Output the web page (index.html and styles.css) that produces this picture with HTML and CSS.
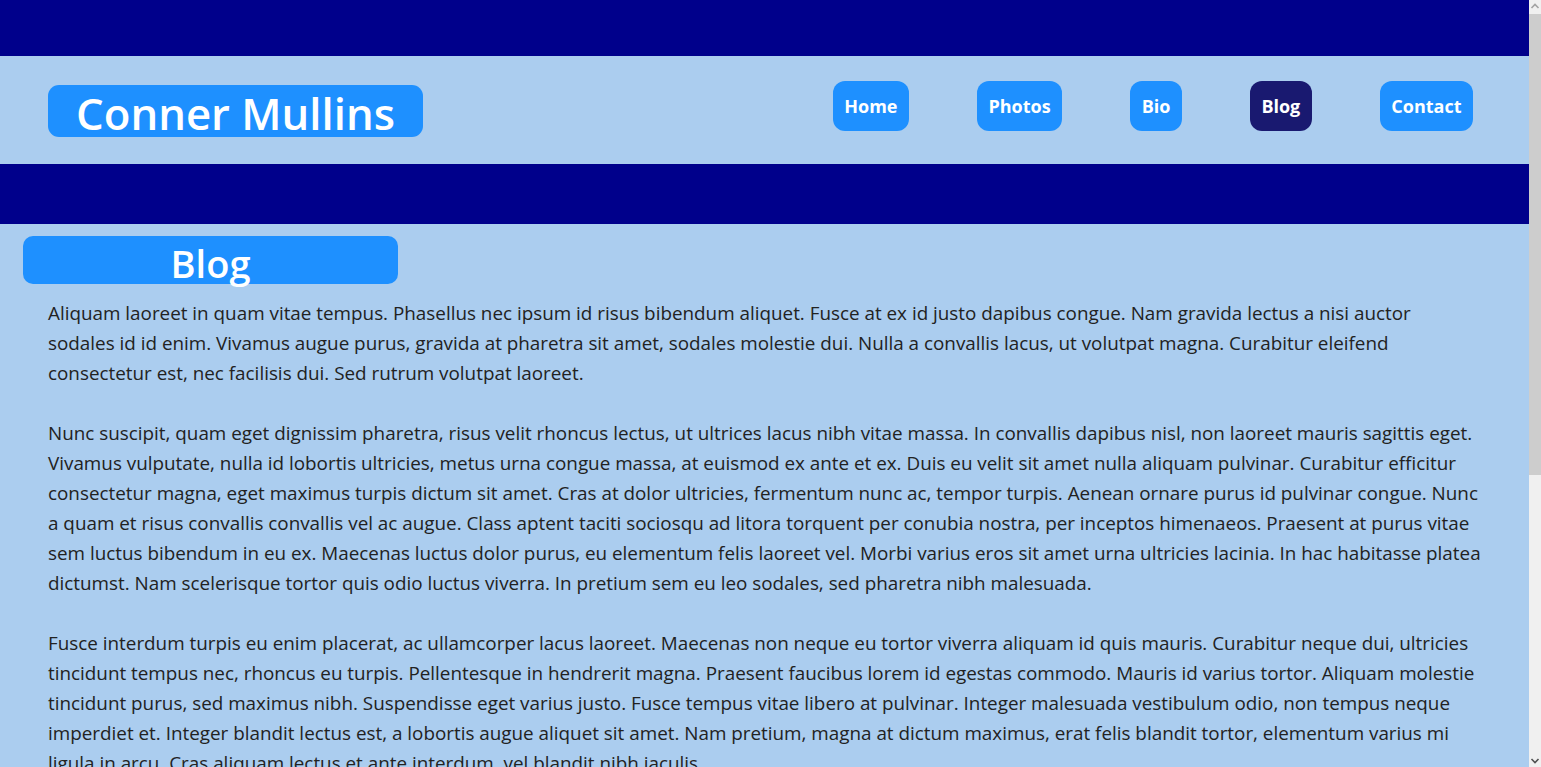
FILE: index.html
```html
<!DOCTYPE html>
<html lang="en">
<head>
<meta charset="utf-8">
<title>Conner Mullins - Blog</title>
<link rel="stylesheet" href="styles.css">
</head>
<body>
<div class="page">
  <div class="band band-top"></div>
  <header class="header">
    <h1 class="site-title">Conner Mullins</h1>
    <nav class="nav">
      <a class="nav-link" href="#">Home</a>
      <a class="nav-link" href="#">Photos</a>
      <a class="nav-link" href="#">Bio</a>
      <a class="nav-link active" href="#">Blog</a>
      <a class="nav-link" href="#">Contact</a>
    </nav>
  </header>
  <div class="band band-bottom"></div>
  <main class="content">
    <h2 class="page-title">Blog</h2>
    <p>Aliquam laoreet in quam vitae tempus. Phasellus nec ipsum id risus bibendum aliquet. Fusce at ex id justo dapibus congue. Nam gravida lectus a nisi auctor sodales id id enim. Vivamus augue purus, gravida at pharetra sit amet, sodales molestie dui. Nulla a convallis lacus, ut volutpat magna. Curabitur eleifend consectetur est, nec facilisis dui. Sed rutrum volutpat laoreet.</p>
    <p>Nunc suscipit, quam eget dignissim pharetra, risus velit rhoncus lectus, ut ultrices lacus nibh vitae massa. In convallis dapibus nisl, non laoreet mauris sagittis eget. Vivamus vulputate, nulla id lobortis ultricies, metus urna congue massa, at euismod ex ante et ex. Duis eu velit sit amet nulla aliquam pulvinar. Curabitur efficitur consectetur magna, eget maximus turpis dictum sit amet. Cras at dolor ultricies, fermentum nunc ac, tempor turpis. Aenean ornare purus id pulvinar congue. Nunc a quam et risus convallis convallis vel ac augue. Class aptent taciti sociosqu ad litora torquent per conubia nostra, per inceptos himenaeos. Praesent at purus vitae sem luctus bibendum in eu ex. Maecenas luctus dolor purus, eu elementum felis laoreet vel. Morbi varius eros sit amet urna ultricies lacinia. In hac habitasse platea dictumst. Nam scelerisque tortor quis odio luctus viverra. In pretium sem eu leo sodales, sed pharetra nibh malesuada.</p>
    <p>Fusce interdum turpis eu enim placerat, ac ullamcorper lacus laoreet. Maecenas non neque eu tortor viverra aliquam id quis mauris. Curabitur neque dui, ultricies tincidunt tempus nec, rhoncus eu turpis. Pellentesque in hendrerit magna. Praesent faucibus lorem id egestas commodo. Mauris id varius tortor. Aliquam molestie tincidunt purus, sed maximus nibh. Suspendisse eget varius justo. Fusce tempus vitae libero at pulvinar. Integer malesuada vestibulum odio, non tempus neque imperdiet et. Integer blandit lectus est, a lobortis augue aliquet sit amet. Nam pretium, magna at dictum maximus, erat felis blandit tortor, elementum varius mi ligula in arcu. Cras aliquam lectus et ante interdum, vel blandit nibh iaculis.</p>
    <p>Donec vehicula, lorem at tincidunt facilisis, ipsum nisl aliquet erat, sed fermentum lectus lorem non leo. Sed posuere elit a nunc tristique, vel volutpat sem pellentesque. Proin euismod dui in turpis pharetra, nec finibus purus sodales. Etiam eget eros sit amet metus tempor vestibulum. Vestibulum ante ipsum primis in faucibus orci luctus et ultrices posuere cubilia curae; Integer ac lorem vel justo tincidunt dignissim. Suspendisse potenti.</p>
  </main>
</div>
<div class="scrollbar" aria-hidden="true">
  <svg class="scroll-arrow" width="12" height="14" viewBox="0 0 12 14"><path d="M2.5 8 L6 4.5 L9.5 8" fill="none" stroke="#a3a3a3" stroke-width="1.6"/></svg>
  <div class="scroll-thumb"></div>
  <div class="scroll-rest"></div>
  <svg class="scroll-arrow" width="12" height="14" viewBox="0 0 12 14"><path d="M2.5 6 L6 9.5 L9.5 6" fill="none" stroke="#505050" stroke-width="1.6"/></svg>
</div>
</body>
</html>
```

FILE: styles.css
```css
html {
  background: #abcdef;
}

body {
  margin: 0;
  background: #abcdef;
  font-family: "Open Sans", "Noto Sans", sans-serif;
  color: #222222;
}

.page {
  margin-right: 12px;
}

.scrollbar {
  position: fixed;
  top: 0;
  right: 0;
  width: 12px;
  height: 100vh;
  display: flex;
  flex-direction: column;
  background: #f0f0f0;
}

.scroll-arrow {
  display: block;
  flex: none;
}

.scroll-thumb {
  height: 461px;
  background: #cdcdcd;
}

.scroll-rest {
  flex: 1;
}

.band {
  background: #00008b;
}
.band-top {
  height: 56px;
}
.band-bottom {
  height: 60px;
}

.header {
  height: 108px;
  box-sizing: border-box;
  display: flex;
  justify-content: space-between;
  align-items: flex-start;
  padding: 25px 56px 0 48px;
}

.site-title {
  margin: 4px 0 0;
  width: 375px;
  height: 52px;
  background: #1e90ff;
  color: #ffffff;
  border-radius: 11px;
  font-size: 43.7px;
  font-weight: 600;
  line-height: 56px;
  text-align: center;
  white-space: nowrap;
}

.nav {
  display: flex;
  gap: 68px;
}

.nav-link {
  display: flex;
  align-items: center;
  height: 50px;
  padding: 0 11.5px;
  background: #1e90ff;
  color: #ffffff;
  border-radius: 12px;
  font-size: 18px;
  font-weight: 700;
  text-decoration: none;
}

.nav-link.active {
  background: #191970;
}

.content {
  padding: 12px 48px 40px;
}

.page-title {
  margin: 0 0 14px -25px;
  width: 375px;
  height: 48px;
  background: #1e90ff;
  color: #ffffff;
  border-radius: 10px;
  font-size: 38px;
  font-weight: 600;
  line-height: 54px;
  text-align: center;
}

.content p {
  margin: 0 0 30px;
  font-size: 18.85px;
  line-height: 30px;
}
```
